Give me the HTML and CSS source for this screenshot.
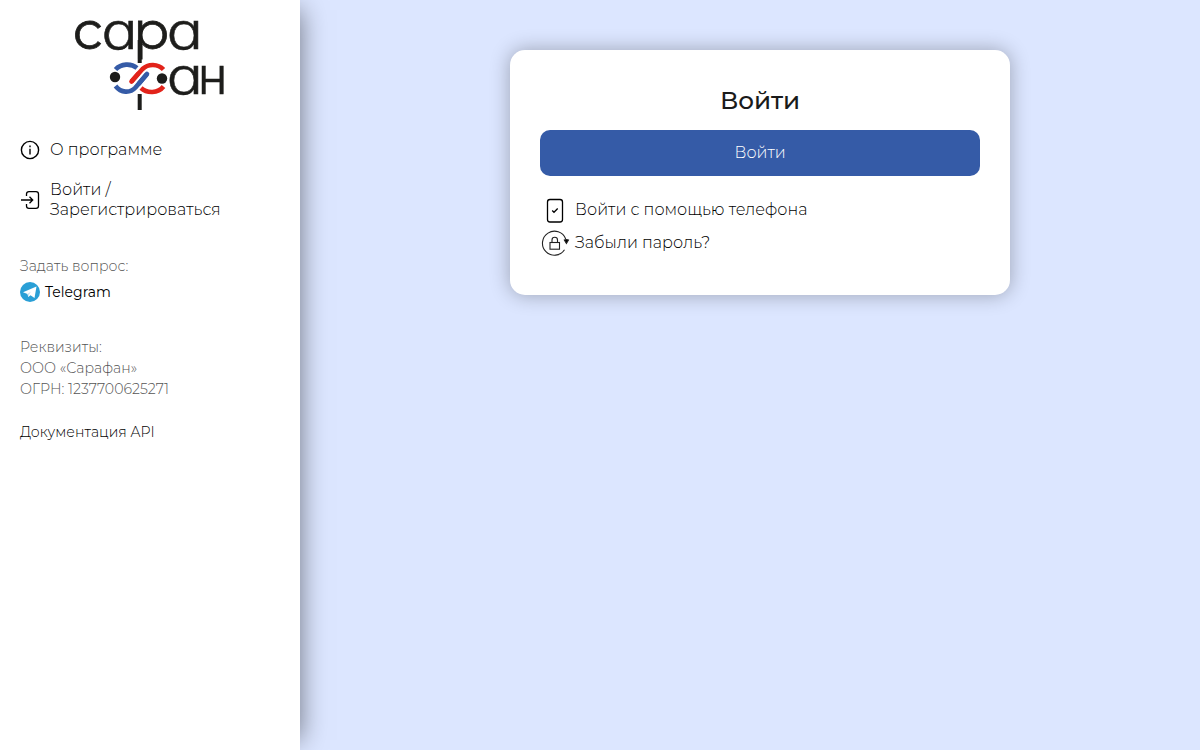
FILE: index.html
```html
<!DOCTYPE html>
<html lang="ru">
<head>
    <meta charset="UTF-8">
    <meta name="viewport" content="width=device-width, initial-scale=1.0">
    <title>Сарафан</title>
    <link rel="stylesheet" href="styles.css">
</head>
<body>
    <aside class="sidebar">
        <a class="logo" href="#">
            <svg width="150" height="90" viewBox="0 0 150 90">
                <text class="logo-text round" x="-2.2" y="28.7">с</text>
                <text class="logo-text" transform="translate(26.3 28.7) scale(1.19 1)">а</text>
                <text class="logo-text round" x="58" y="28.7">р</text>
                <text class="logo-text" transform="translate(91.5 28.7) scale(1.19 1)">а</text>
                <text class="logo-text" transform="translate(91.5 73.5) scale(1.19 1)">а</text>
                <text class="logo-text" x="122.7" y="73.5">н</text>
                <path d="M64.7 20V43M64.7 74V90" stroke="#1d1d1b" stroke-width="4"/>
                <g fill="none" stroke-width="4.6">
                    <path d="M40.5 49.5C46 43.5 56 43 62 48" stroke="#355ba7"/>
                    <path d="M66 68C72 73.5 83 73.5 88.5 66.5" stroke="#e2231a"/>
                    <path d="M72 54L60.5 67.5C55 73.5 46 73 40.5 66" stroke="#355ba7"/>
                    <path d="M72 54L64 63.5" stroke="#355ba7" stroke-linecap="round"/>
                    <path d="M56.5 61.5L67.5 49C73 43.5 83 43.5 88.5 49.5" stroke="#e2231a"/>
                    <path d="M56.5 61.5L63 54" stroke="#e2231a" stroke-linecap="round"/>
                </g>
                <circle cx="40" cy="57" r="5.2" fill="#1d1d1b"/>
                <circle cx="87" cy="58.5" r="5.2" fill="#1d1d1b"/>
            </svg>
        </a>
        <nav class="menu">
            <a class="menu-item" href="#">
                <svg width="20" height="20" viewBox="0 0 20 20" fill="none" stroke="#000" stroke-width="1.4">
                    <circle cx="10" cy="10" r="8.6"/>
                    <path d="M10 8.7V14.5M10 5.5V7.2"/>
                </svg>
                <span>О программе</span>
            </a>
            <a class="menu-item" href="#">
                <svg width="20" height="20" viewBox="0 0 20 20" fill="none" stroke="#000" stroke-width="1.3">
                    <path d="M6.5 6V4Q6.5 1.7 9 1.7H16Q18.5 1.7 18.5 4V16Q18.5 18.3 16 18.3H9Q6.5 18.3 6.5 16V14"/>
                    <path d="M1 10H12.5M9.5 6.8L12.7 10L9.5 13.2"/>
                </svg>
                <span>Войти /<br>Зарегистрироваться</span>
            </a>
        </nav>
        <div class="question">
            <div class="ask">Задать вопрос:</div>
            <a class="telegram" href="#">
                <svg width="20" height="20" viewBox="0 0 20 20">
                    <circle cx="10" cy="10" r="10" fill="#2a9fd6"/>
                    <path d="M3 10.2L16.5 4.5L14.5 16L10.5 13.2L8.3 15L7.5 12Z" fill="#fff"/>
                    <path d="M7.5 12L11 9.5L9 12.5L8.3 15Z" fill="#c5e1f1"/>
                </svg>
                <span>Telegram</span>
            </a>
        </div>
        <div class="details">
            <div>Реквизиты:</div>
            <div>ООО «Сарафан»</div>
            <div>ОГРН: 1237700625271</div>
        </div>
        <a class="docs" href="#">Документация API</a>
    </aside>
    <main class="content">
        <div class="card">
            <h1>Войти</h1>
            <button class="login">Войти</button>
            <a class="card-link" href="#">
                <svg width="30" height="30" viewBox="0 0 30 30" fill="none" stroke="#000" stroke-width="1.3">
                    <rect x="7.5" y="4.5" width="15" height="22.5" rx="2.5"/>
                    <path d="M12.2 15.5L14 17.3L17.7 13.5"/>
                </svg>
                <span>Войти с помощью телефона</span>
            </a>
            <a class="card-link" href="#">
                <svg width="30" height="30" viewBox="0 0 30 30" fill="none" stroke="#222" stroke-width="1.1">
                    <path d="M25.7 11A12 12 0 1 0 24.5 21.8"/>
                    <path d="M24.3 12Q26.3 11 28.5 12L26.4 15.5Z" fill="#000"/>
                    <rect x="10" y="14.5" width="9.5" height="6.7"/>
                    <path d="M12 14.5V12A2.7 2.7 0 0 1 17.5 12V14.5"/>
                </svg>
                <span>Забыли пароль?</span>
            </a>
        </div>
    </main>
</body>
</html>
```
FILE: styles.css
```css
* {
    box-sizing: border-box;
}
body {
    margin: 0;
    display: flex;
    height: 100vh;
    background: #dce6ff;
    font-family: Montserrat, Inter, "Open Sans", sans-serif;
    font-weight: 300;
    font-size: 16px;
    line-height: 20px;
    letter-spacing: 0.03px;
    color: #000;
    overflow: hidden;
}
a {
    color: inherit;
    text-decoration: none;
}
svg {
    display: block;
    flex-shrink: 0;
}
span {
    white-space: nowrap;
}
.sidebar {
    width: 300px;
    height: 100%;
    padding: 20px;
    background: #fff;
    box-shadow: 10px 0 25px -10px rgba(0, 0, 0, 0.5);
}
.logo {
    display: flex;
    justify-content: center;
}
.logo svg {
    overflow: visible;
}
.logo-text {
    font-family: Inter, sans-serif;
    font-size: 51px;
    font-weight: 300;
    font-optical-sizing: none;
    font-feature-settings: "cv11";
    letter-spacing: 0;
    fill: #1d1d1b;
    stroke: #1d1d1b;
    stroke-width: 0.5px;
}
.round {
    font-family: Montserrat, Inter, sans-serif;
    font-size: 53px;
    font-weight: 400;
    stroke-width: 0.8px;
}
.menu {
    margin-top: 30px;
}
.menu-item {
    display: flex;
    align-items: center;
    gap: 10px;
    margin-bottom: 20px;
}
.question {
    margin-top: 36px;
    font-size: 14.1px;
}
.ask, .details {
    color: #555;
}
.telegram {
    display: flex;
    align-items: center;
    gap: 5px;
    margin-top: 6px;
    font-size: 14px;
    font-weight: 400;
}
.details {
    margin-top: 35px;
    font-size: 14.1px;
    line-height: 21px;
}
.docs {
    display: inline-block;
    margin-top: 22px;
    font-size: 14.1px;
}
.content {
    flex: 1;
    padding: 50px 0 0 20px;
}
.card {
    width: 500px;
    height: 245px;
    margin: 0 auto;
    padding: 35px 30px;
    border-radius: 15px;
    background: #fff;
    box-shadow: 0 0 20px rgba(0, 0, 0, 0.3);
}
h1 {
    margin: 0 0 15px;
    font-size: 24.6px;
    line-height: 30px;
    font-weight: 500;
    letter-spacing: -0.1px;
    text-align: center;
    color: #1a1a1a;
}
.login {
    display: block;
    width: 100%;
    height: 46px;
    margin-bottom: 19px;
    border: none;
    border-radius: 10px;
    background: #355ba7;
    color: #fff;
    font: inherit;
}
.card-link {
    display: flex;
    align-items: center;
    gap: 5px;
    margin-bottom: 3px;
}
```
